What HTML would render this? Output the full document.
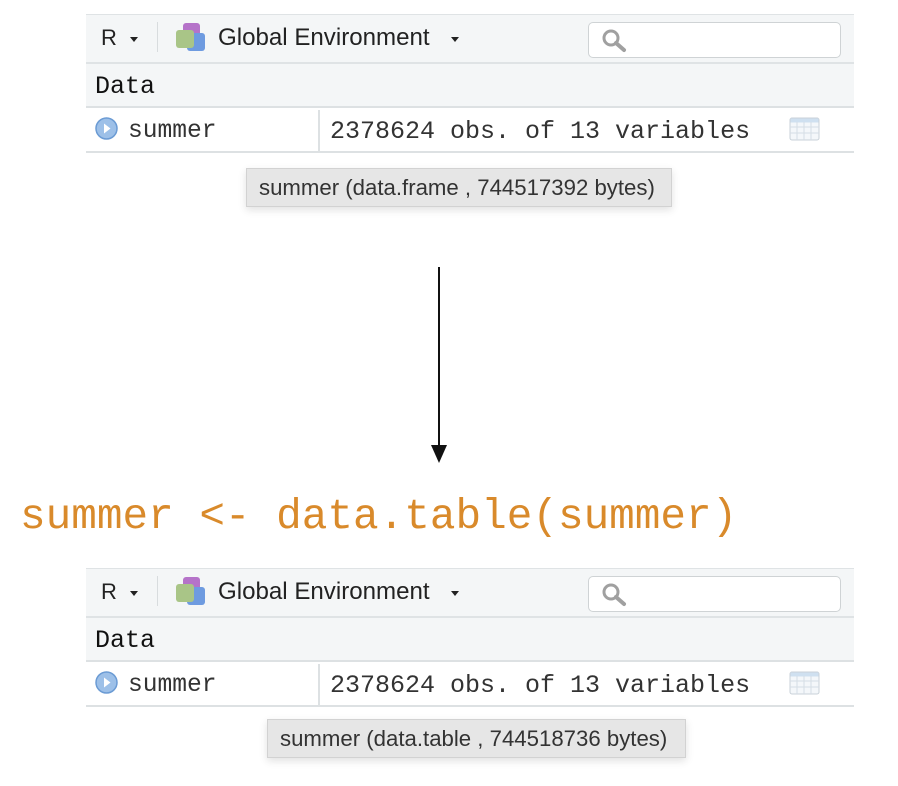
<!DOCTYPE html>
<html><head><meta charset="utf-8"><style>
*{margin:0;padding:0;box-sizing:border-box}
body{width:898px;height:786px;background:#fff;position:relative;overflow:hidden;font-family:"Liberation Sans",sans-serif}
.a{position:absolute;line-height:1}
.tb{left:86px;width:768px;height:50px;background:#f4f6f7;border-top:1px solid #dfe3e5;border-bottom:2px solid #dfe3e5}
.dh{left:86px;width:768px;height:44px;background:#f4f6f7;border-bottom:2px solid #dde1e3}
.mono{font-family:"Liberation Mono",monospace;color:#333}
.tt{height:39px;background:#e6e6e6;border:1px solid #d2d2d2;box-shadow:0 3px 8px rgba(0,0,0,.12);font-size:22.2px;color:#333;line-height:37px;padding-left:12px;white-space:nowrap}
</style></head><body>

<div class="a" style="left:0;top:0;width:898px;height:220px">
 <div class="a tb" style="top:14px"></div>
 <div class="a" style="left:101px;top:27px;font-size:22px;color:#222">R</div>
 <div class="a" style="left:130px;top:37px;border:4px solid transparent;border-top:5px solid #222"></div>
 <div class="a" style="left:157px;top:22px;width:1px;height:30px;background:#d8dcde"></div>
 <svg class="a" style="left:173px;top:21px" width="36" height="32"><rect x="10" y="2" width="17" height="17" rx="3" fill="#b573c9"/><rect x="14" y="12" width="18" height="18" rx="3" fill="#6e9be0"/><rect x="3" y="9" width="18" height="18" rx="3" fill="#a9c587"/></svg>
 <div class="a" style="left:218px;top:26px;font-size:24.1px;color:#222;white-space:nowrap">Global Environment</div>
 <div class="a" style="left:451px;top:37px;border:4px solid transparent;border-top:5px solid #222"></div>
 <div class="a" style="left:588px;top:22px;width:253px;height:36px;background:#fff;border:1px solid #cfd3d5;border-radius:5px"></div>
 <svg class="a" style="left:600px;top:28px" width="32" height="26"><circle cx="11" cy="10" r="7" fill="none" stroke="#a0a0a0" stroke-width="3"/><line x1="16" y1="15" x2="24" y2="22" stroke="#a0a0a0" stroke-width="4" stroke-linecap="round"/></svg>
 <div class="a dh" style="top:64px"></div>
 <div class="a mono" style="left:95px;top:74px;font-size:25px;color:#111">Data</div>
 <div class="a" style="left:86px;top:151px;width:768px;height:2px;background:#dde1e3"></div>
 <div class="a" style="left:318px;top:110px;width:2px;height:42px;background:#dde1e3"></div>
 <svg class="a" style="left:95px;top:117px" width="24" height="24"><circle cx="11.5" cy="11.5" r="10.5" fill="#9dc0e8" stroke="#6b9bd4" stroke-width="1.5"/><path d="M9 6.5 L15.5 11.5 L9 16.5Z" fill="#fff"/></svg>
 <div class="a mono" style="left:128px;top:120px;font-size:24.6px">summer</div>
 <div class="a mono" style="left:330px;top:119px;font-size:25px;white-space:nowrap">2378624 obs. of 13 variables</div>
 <svg class="a" style="left:789px;top:117px" width="32" height="24"><rect x="1" y="1" width="29" height="22" rx="2" fill="#f4f7fa" stroke="#c8d0d8"/><rect x="1.5" y="1.5" width="28" height="4" fill="#cfe0f0"/><path d="M1 10H30M1 16H30M8 5V23M15 5V23M22 5V23" stroke="#d5dde5"/></svg>
 <div class="a tt" style="left:246px;top:168px;width:426px;line-height:37px">summer (data.frame , 744517392 bytes)</div>
</div>

<div class="a" style="left:438px;top:267px;width:2px;height:180px;background:#111"></div>
<div class="a" style="left:431px;top:445px;border-left:8px solid transparent;border-right:8px solid transparent;border-top:18px solid #111"></div>

<div class="a" style="left:20px;top:496px;font-family:'Liberation Mono',monospace;font-size:42.7px;color:#d98a2b;white-space:pre">summer &lt;- data.table(summer)</div>

<div class="a" style="left:0;top:554px;width:898px;height:220px">
 <div class="a tb" style="top:14px"></div>
 <div class="a" style="left:101px;top:27px;font-size:22px;color:#222">R</div>
 <div class="a" style="left:130px;top:37px;border:4px solid transparent;border-top:5px solid #222"></div>
 <div class="a" style="left:157px;top:22px;width:1px;height:30px;background:#d8dcde"></div>
 <svg class="a" style="left:173px;top:21px" width="36" height="32"><rect x="10" y="2" width="17" height="17" rx="3" fill="#b573c9"/><rect x="14" y="12" width="18" height="18" rx="3" fill="#6e9be0"/><rect x="3" y="9" width="18" height="18" rx="3" fill="#a9c587"/></svg>
 <div class="a" style="left:218px;top:26px;font-size:24.1px;color:#222;white-space:nowrap">Global Environment</div>
 <div class="a" style="left:451px;top:37px;border:4px solid transparent;border-top:5px solid #222"></div>
 <div class="a" style="left:588px;top:22px;width:253px;height:36px;background:#fff;border:1px solid #cfd3d5;border-radius:5px"></div>
 <svg class="a" style="left:600px;top:28px" width="32" height="26"><circle cx="11" cy="10" r="7" fill="none" stroke="#a0a0a0" stroke-width="3"/><line x1="16" y1="15" x2="24" y2="22" stroke="#a0a0a0" stroke-width="4" stroke-linecap="round"/></svg>
 <div class="a dh" style="top:64px"></div>
 <div class="a mono" style="left:95px;top:74px;font-size:25px;color:#111">Data</div>
 <div class="a" style="left:86px;top:151px;width:768px;height:2px;background:#dde1e3"></div>
 <div class="a" style="left:318px;top:110px;width:2px;height:42px;background:#dde1e3"></div>
 <svg class="a" style="left:95px;top:117px" width="24" height="24"><circle cx="11.5" cy="11.5" r="10.5" fill="#9dc0e8" stroke="#6b9bd4" stroke-width="1.5"/><path d="M9 6.5 L15.5 11.5 L9 16.5Z" fill="#fff"/></svg>
 <div class="a mono" style="left:128px;top:120px;font-size:24.6px">summer</div>
 <div class="a mono" style="left:330px;top:119px;font-size:25px;white-space:nowrap">2378624 obs. of 13 variables</div>
 <svg class="a" style="left:789px;top:117px" width="32" height="24"><rect x="1" y="1" width="29" height="22" rx="2" fill="#f4f7fa" stroke="#c8d0d8"/><rect x="1.5" y="1.5" width="28" height="4" fill="#cfe0f0"/><path d="M1 10H30M1 16H30M8 5V23M15 5V23M22 5V23" stroke="#d5dde5"/></svg>
 <div class="a tt" style="left:267px;top:165px;width:419px;line-height:37px">summer (data.table , 744518736 bytes)</div>
</div>
</body></html>
